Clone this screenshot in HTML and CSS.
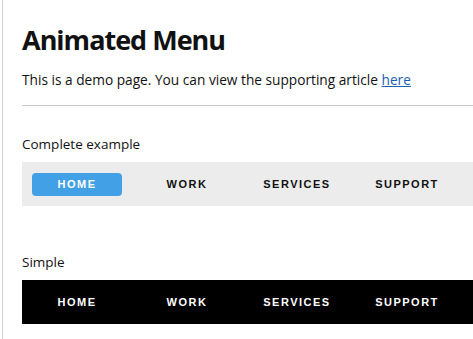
FILE: index.html
```html
<!DOCTYPE html>
<html lang="en">
<head>
    <meta charset="UTF-8">
    <meta name="viewport" content="width=device-width, initial-scale=1.0">
    <title>Animated Menu</title>
    <link rel="stylesheet" href="styles.css">
</head>
<body>
    <div class="page">
        <h1 class="title">Animated Menu</h1>
        <p class="intro">This is a demo page. You can view the supporting article <a href="#">here</a></p>
        <hr class="divider">

        <h3 class="section-label">Complete example</h3>
        <ul class="menu menu-complete">
            <li class="menu-item active"><a href="#">Home</a></li>
            <li class="menu-item"><a href="#">Work</a></li>
            <li class="menu-item"><a href="#">Services</a></li>
            <li class="menu-item"><a href="#">Support</a></li>
        </ul>

        <h3 class="section-label simple-label">Simple</h3>
        <ul class="menu menu-simple">
            <li class="menu-item"><a href="#">Home</a></li>
            <li class="menu-item"><a href="#">Work</a></li>
            <li class="menu-item"><a href="#">Services</a></li>
            <li class="menu-item"><a href="#">Support</a></li>
        </ul>
    </div>
</body>
</html>
```

FILE: styles.css
```css
body {
    margin: 0;
    padding: 0;
    background-color: #fff;
    color: #111;
    font-family: "Open Sans", "DejaVu Sans", sans-serif;
    overflow: hidden;
}
.page {
    margin-left: 2px;
    border-left: 1px solid #cfcfcf;
    padding: 22px 0 0 19px;
    min-height: 339px;
    box-sizing: border-box;
}
.title {
    margin: 0;
    font-size: 27px;
    line-height: 36px;
    letter-spacing: -1px;
    font-weight: bold;
    color: #111;
}
.intro {
    margin: 12px 0 0;
    font-size: 13.7px;
    line-height: 20px;
}
.intro a {
    color: #1a5fb4;
}
.divider {
    margin: 15px 0 0;
    border: none;
    border-top: 1px solid #c8c8c8;
    height: 0;
}
.section-label {
    margin: 28px 0 0;
    font-size: 13.5px;
    line-height: 20px;
    font-weight: normal;
}
.simple-label {
    margin-top: 46px;
}

/* menus */
.menu {
    list-style: none;
    margin: 8px 0 0;
    padding: 0;
    display: flex;
    height: 44px;
    align-items: center;
}
.menu-item {
    width: 110px;
    display: flex;
    justify-content: center;
}
.menu-item a {
    display: block;
    width: 90px;
    height: 23px;
    line-height: 23px;
    text-align: center;
    border-radius: 4px;
    font-family: "Liberation Sans", Arial, sans-serif;
    font-size: 11px;
    font-weight: bold;
    letter-spacing: 1.5px;
    text-transform: uppercase;
    text-decoration: none;
}
.menu-complete {
    background-color: #ececec;
}
.menu-complete a {
    color: #111;
}
.menu-complete .active a {
    background-color: #42a0e6;
    color: #fff;
}
.menu-simple {
    background-color: #000;
}
.menu-simple a {
    color: #fff;
}
```
